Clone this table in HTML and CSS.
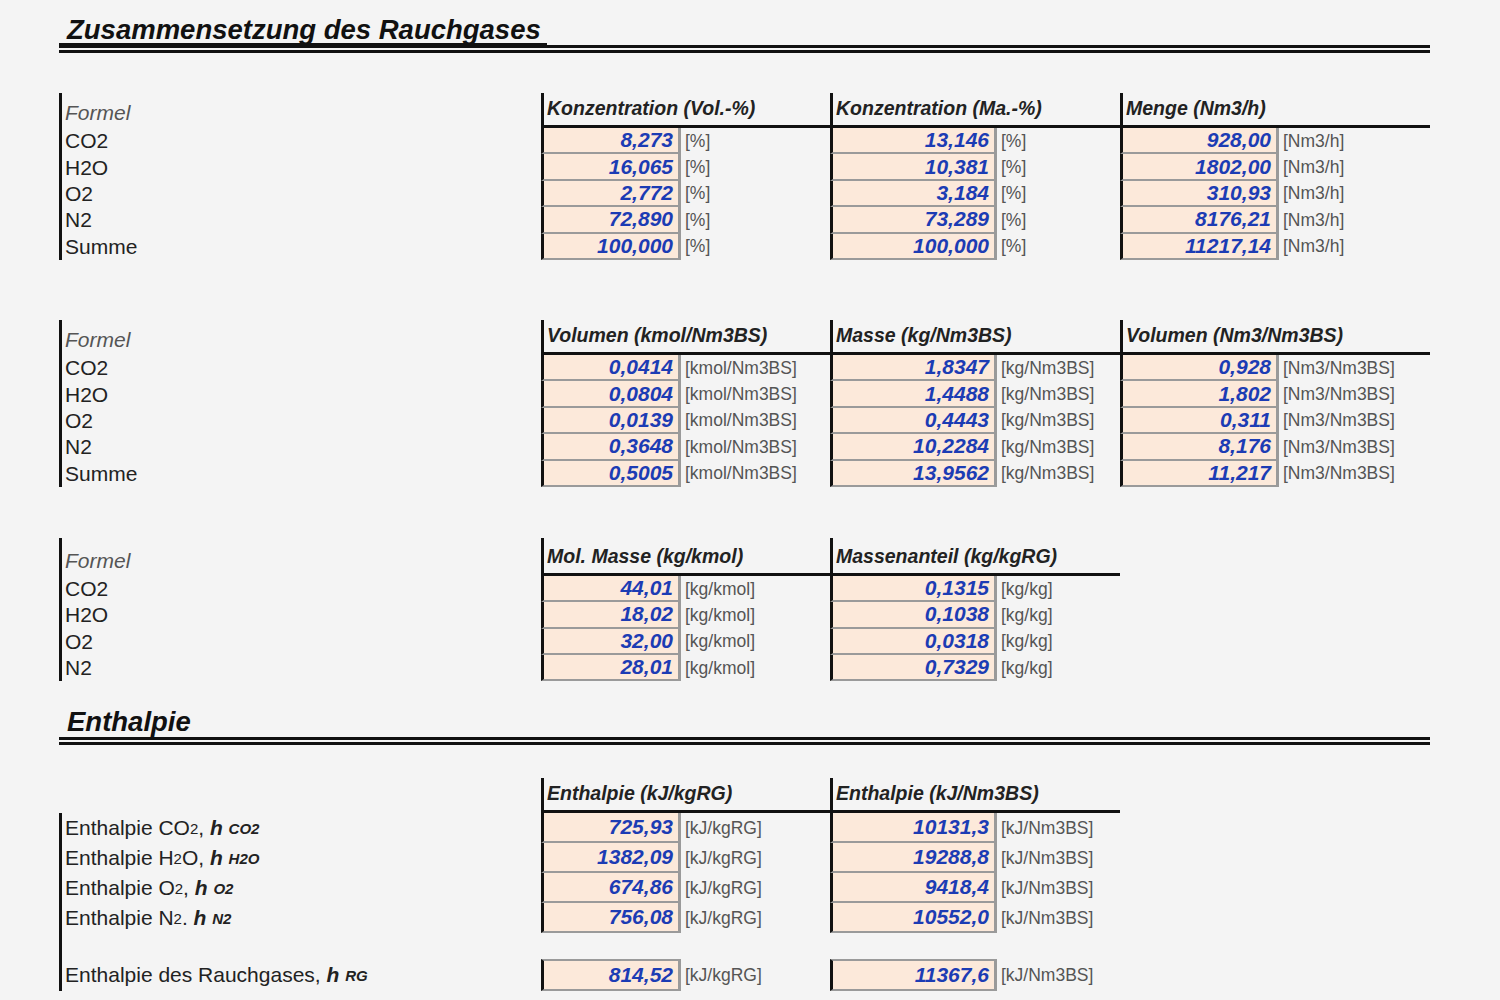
FILE: index.html
```html
<!DOCTYPE html>
<html>
<head>
<meta charset="utf-8">
<link rel="stylesheet" href="styles.css">
</head>
<body>
  <div class="sheet">
    <h1 class="sheet__title"><span class="sheet__title-text sheet__title-text_underlined">Zusammensetzung des Rauchgases</span></h1>

    <!-- Konzentration -->
    <div class="grid grid_comp grid_first">
      <div class="grid__label grid__label_head">Formel</div>
      <div class="grid__head">Konzentration (Vol.-%)</div>
      <div class="grid__head">Konzentration (Ma.-%)</div>
      <div class="grid__head">Menge (Nm3/h)</div>

      <div class="grid__label">CO2</div>
      <div class="grid__val">8,273</div><div class="grid__unit">[%]</div>
      <div class="grid__val">13,146</div><div class="grid__unit">[%]</div>
      <div class="grid__val">928,00</div><div class="grid__unit">[Nm3/h]</div>

      <div class="grid__label">H2O</div>
      <div class="grid__val">16,065</div><div class="grid__unit">[%]</div>
      <div class="grid__val">10,381</div><div class="grid__unit">[%]</div>
      <div class="grid__val">1802,00</div><div class="grid__unit">[Nm3/h]</div>

      <div class="grid__label">O2</div>
      <div class="grid__val">2,772</div><div class="grid__unit">[%]</div>
      <div class="grid__val">3,184</div><div class="grid__unit">[%]</div>
      <div class="grid__val">310,93</div><div class="grid__unit">[Nm3/h]</div>

      <div class="grid__label">N2</div>
      <div class="grid__val">72,890</div><div class="grid__unit">[%]</div>
      <div class="grid__val">73,289</div><div class="grid__unit">[%]</div>
      <div class="grid__val">8176,21</div><div class="grid__unit">[Nm3/h]</div>

      <div class="grid__label">Summe</div>
      <div class="grid__val">100,000</div><div class="grid__unit">[%]</div>
      <div class="grid__val">100,000</div><div class="grid__unit">[%]</div>
      <div class="grid__val">11217,14</div><div class="grid__unit">[Nm3/h]</div>
    </div>

    <!-- Volumen / Masse pro Nm3 Brennstoff -->
    <div class="grid grid_comp grid_second">
      <div class="grid__label grid__label_head">Formel</div>
      <div class="grid__head">Volumen (kmol/Nm3BS)</div>
      <div class="grid__head">Masse (kg/Nm3BS)</div>
      <div class="grid__head">Volumen (Nm3/Nm3BS)</div>

      <div class="grid__label">CO2</div>
      <div class="grid__val">0,0414</div><div class="grid__unit">[kmol/Nm3BS]</div>
      <div class="grid__val">1,8347</div><div class="grid__unit">[kg/Nm3BS]</div>
      <div class="grid__val">0,928</div><div class="grid__unit">[Nm3/Nm3BS]</div>

      <div class="grid__label">H2O</div>
      <div class="grid__val">0,0804</div><div class="grid__unit">[kmol/Nm3BS]</div>
      <div class="grid__val">1,4488</div><div class="grid__unit">[kg/Nm3BS]</div>
      <div class="grid__val">1,802</div><div class="grid__unit">[Nm3/Nm3BS]</div>

      <div class="grid__label">O2</div>
      <div class="grid__val">0,0139</div><div class="grid__unit">[kmol/Nm3BS]</div>
      <div class="grid__val">0,4443</div><div class="grid__unit">[kg/Nm3BS]</div>
      <div class="grid__val">0,311</div><div class="grid__unit">[Nm3/Nm3BS]</div>

      <div class="grid__label">N2</div>
      <div class="grid__val">0,3648</div><div class="grid__unit">[kmol/Nm3BS]</div>
      <div class="grid__val">10,2284</div><div class="grid__unit">[kg/Nm3BS]</div>
      <div class="grid__val">8,176</div><div class="grid__unit">[Nm3/Nm3BS]</div>

      <div class="grid__label">Summe</div>
      <div class="grid__val">0,5005</div><div class="grid__unit">[kmol/Nm3BS]</div>
      <div class="grid__val">13,9562</div><div class="grid__unit">[kg/Nm3BS]</div>
      <div class="grid__val">11,217</div><div class="grid__unit">[Nm3/Nm3BS]</div>
    </div>

    <!-- Molmasse -->
    <div class="grid grid_narrow grid_mol">
      <div class="grid__label grid__label_head">Formel</div>
      <div class="grid__head">Mol. Masse (kg/kmol)</div>
      <div class="grid__head">Massenanteil (kg/kgRG)</div>

      <div class="grid__label">CO2</div>
      <div class="grid__val">44,01</div><div class="grid__unit">[kg/kmol]</div>
      <div class="grid__val">0,1315</div><div class="grid__unit">[kg/kg]</div>

      <div class="grid__label">H2O</div>
      <div class="grid__val">18,02</div><div class="grid__unit">[kg/kmol]</div>
      <div class="grid__val">0,1038</div><div class="grid__unit">[kg/kg]</div>

      <div class="grid__label">O2</div>
      <div class="grid__val">32,00</div><div class="grid__unit">[kg/kmol]</div>
      <div class="grid__val">0,0318</div><div class="grid__unit">[kg/kg]</div>

      <div class="grid__label">N2</div>
      <div class="grid__val">28,01</div><div class="grid__unit">[kg/kmol]</div>
      <div class="grid__val">0,7329</div><div class="grid__unit">[kg/kg]</div>
    </div>

    <h1 class="sheet__title sheet__title_second"><span class="sheet__title-text">Enthalpie</span></h1>

    <!-- Enthalpie -->
    <div class="grid grid_narrow grid_enth">
      <div></div>
      <div class="grid__head">Enthalpie (kJ/kgRG)</div>
      <div class="grid__head">Enthalpie (kJ/Nm3BS)</div>

      <div class="grid__label">Enthalpie CO<span class="grid__small">2</span>,&nbsp;<b class="grid__sym">h</b>&nbsp;<b class="grid__idx">CO2</b></div>
      <div class="grid__val">725,93</div><div class="grid__unit">[kJ/kgRG]</div>
      <div class="grid__val">10131,3</div><div class="grid__unit">[kJ/Nm3BS]</div>

      <div class="grid__label">Enthalpie H<span class="grid__small">2</span>O,&nbsp;<b class="grid__sym">h</b>&nbsp;<b class="grid__idx">H2O</b></div>
      <div class="grid__val">1382,09</div><div class="grid__unit">[kJ/kgRG]</div>
      <div class="grid__val">19288,8</div><div class="grid__unit">[kJ/Nm3BS]</div>

      <div class="grid__label">Enthalpie O<span class="grid__small">2</span>,&nbsp;<b class="grid__sym">h</b>&nbsp;<b class="grid__idx">O2</b></div>
      <div class="grid__val">674,86</div><div class="grid__unit">[kJ/kgRG]</div>
      <div class="grid__val">9418,4</div><div class="grid__unit">[kJ/Nm3BS]</div>

      <div class="grid__label">Enthalpie N<span class="grid__small">2</span>.&nbsp;<b class="grid__sym">h</b>&nbsp;<b class="grid__idx">N2</b></div>
      <div class="grid__val">756,08</div><div class="grid__unit">[kJ/kgRG]</div>
      <div class="grid__val">10552,0</div><div class="grid__unit">[kJ/Nm3BS]</div>

      <div class="grid__label"></div>
      <div class="grid__gap"></div>

      <div class="grid__label">Enthalpie des Rauchgases,&nbsp;<b class="grid__sym">h</b>&nbsp;<b class="grid__idx">RG</b></div>
      <div class="grid__val grid__val_single">814,52</div><div class="grid__unit">[kJ/kgRG]</div>
      <div class="grid__val grid__val_single">11367,6</div><div class="grid__unit">[kJ/Nm3BS]</div>
    </div>
  </div>
</body>
</html>
```

FILE: styles.css
```css
* {
    box-sizing: border-box;
}
body {
    margin: 0;
    background: #f4f4f4;
    font-family: "Liberation Sans", Arial, sans-serif;
    color: #222;
}
.sheet {
    width: 1430px;
    padding: 17px 0 0 59px;
}

.sheet__title {
    margin: 0;
    height: 36px;
    border-bottom: 8px double #111;
    font-size: 27.5px;
    font-style: italic;
    font-weight: bold;
    line-height: 26px;
    color: #111;
}
.sheet__title-text {
    display: inline-block;
    vertical-align: top;
    padding: 0 6px 0 8px;
}
.sheet__title-text_underlined {
    border-bottom: 2px solid #111;
}
.sheet__title_second {
    margin-top: 28px;
    height: 36px;
}

.grid {
    display: grid;
    grid-template-columns: 482px 140px 149px 167px 123px 159px 151px;
}
.grid_narrow {
    grid-template-columns: 482px 140px 149px 167px 123px;
}
.grid_comp {
    grid-template-rows: 35px repeat(5, 26.4px);
}
.grid_first {
    margin-top: 40px;
}
.grid_second {
    margin-top: 60px;
}
.grid_mol {
    margin-top: 51px;
    grid-template-rows: 38px repeat(4, 26.4px);
}
.grid_enth {
    margin-top: 33px;
    grid-template-rows: 35px repeat(4, 30px) 26px 32px;
}

.grid__label {
    display: flex;
    align-items: center;
    padding-left: 3px;
    border-left: 3px solid #111;
    font-size: 21px;
    white-space: nowrap;
}
.grid__label_head {
    align-items: flex-end;
    padding-bottom: 3px;
    font-style: italic;
    color: #555;
}
.grid__head {
    grid-column: span 2;
    display: flex;
    align-items: flex-end;
    padding: 0 0 5px 3px;
    border-left: 3px solid #111;
    border-bottom: 3px solid #111;
    font-size: 19.5px;
    font-style: italic;
    font-weight: bold;
    white-space: nowrap;
}
.grid__val {
    display: flex;
    align-items: center;
    justify-content: flex-end;
    padding-right: 5px;
    background: #fce9da;
    border-left: 3px solid #111;
    border-right: 3px solid #9a9a9a;
    border-bottom: 2px solid #9a9a9a;
    color: #1c3cb4;
    font-size: 21px;
    font-style: italic;
    font-weight: bold;
}
.grid__val_single {
    border-top: 2px solid #9a9a9a;
}
.grid__unit {
    display: flex;
    align-items: center;
    padding-left: 4px;
    font-size: 17.5px;
    color: #555;
    white-space: nowrap;
}
.grid__gap {
    grid-column: span 4;
}

.grid__small {
    font-size: 15px;
}
.grid__sym {
    font-style: italic;
    font-weight: bold;
}
.grid__idx {
    font-size: 15px;
    font-style: italic;
    font-weight: bold;
}
```
